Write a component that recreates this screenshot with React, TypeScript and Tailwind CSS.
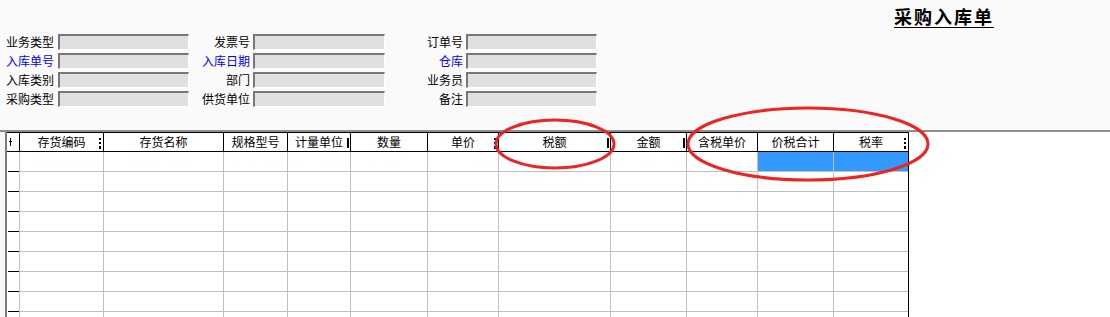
import React from "react";

// 采购入库单 — header form + detail grid, with two red annotation ellipses.

type Field = { label: string; key?: boolean };

const formRows: Field[][] = [
  [{ label: "业务类型" }, { label: "发票号" }, { label: "订单号" }],
  [{ label: "入库单号", key: true }, { label: "入库日期", key: true }, { label: "仓库", key: true }],
  [{ label: "入库类别" }, { label: "部门" }, { label: "业务员" }],
  [{ label: "采购类型" }, { label: "供货单位" }, { label: "备注" }],
];

type Col = { title: string; w: string; mark?: "bar" | "glyph"; blue?: boolean };

const columns: Col[] = [
  { title: "存货编码", w: "w-[84px]", mark: "glyph" },
  { title: "存货名称", w: "w-[120px]" },
  { title: "规格型号", w: "w-[64px]" },
  { title: "计量单位", w: "w-[63px]", mark: "bar" },
  { title: "数量", w: "w-[77px]" },
  { title: "单价", w: "w-[71px]", mark: "glyph" },
  { title: "税额", w: "w-[112px]", mark: "bar" },
  { title: "金额", w: "w-[76px]", mark: "bar" },
  { title: "含税单价", w: "w-[71px]" },
  { title: "价税合计", w: "w-[76px]", blue: true },
  { title: "税率", w: "w-[74px]", mark: "glyph", blue: true },
];

const bodyRows = Array.from({ length: 9 }, (_, i) => i);

function Input() {
  return (
    <div className="h-[16px] bg-[#e0e0e0] border-t-2 border-l-2 border-t-[#777777] border-l-[#777777] border-b border-r border-b-white border-r-white" />
  );
}

function Mark({ kind }: { kind: "bar" | "glyph" }) {
  if (kind === "bar") {
    return <span className="absolute right-[1px] top-[5px] w-[2px] h-[10px] bg-black" />;
  }
  return (
    <span className="absolute right-[2px] top-[5px] flex flex-col gap-[2px]">
      <span className="w-[2px] h-[2px] bg-black" />
      <span className="w-[2px] h-[2px] bg-black" />
      <span className="w-[2px] h-[3px] bg-black" />
    </span>
  );
}

export default function App() {
  return (
    <div className="relative w-[1110px] h-[317px] overflow-hidden bg-white text-[12px] text-black font-['Noto_Sans_CJK_SC','Noto_Sans',sans-serif]">
      {/* header panel */}
      <div className="h-[132px] bg-[#fafafa] border-b-2 border-[#8e8e8e]">
        <div className="h-[32px] flex justify-end pr-[116px] pt-[5px]">
          <h1 className="text-[18px] leading-[22px] font-bold tracking-[2px] underline underline-offset-[3px] decoration-1">
            采购入库单
          </h1>
        </div>
        <div className="flex flex-col">
          {formRows.map((row, ri) => (
            <div
              key={ri}
              className="grid grid-cols-[58px_131px_64px_132px_81px_131px] items-center h-[19px]"
            >
              {row.map((f, fi) => (
                <React.Fragment key={fi}>
                  <span
                    className={`leading-[16px] whitespace-nowrap ${
                      fi === 0 ? "pl-[6px]" : "text-right pr-[3px]"
                    } ${f.key ? "text-[#0000ff]" : ""}`}
                  >
                    {f.label}
                  </span>
                  <Input />
                </React.Fragment>
              ))}
            </div>
          ))}
        </div>
      </div>

      {/* detail grid */}
      <div className="flex h-[185px] overflow-hidden">
        <div className="w-[5px] bg-[#f7f7f7]" />
        <div className="flex flex-col border-l-2 border-[#7c7c7c] border-r border-r-black">
          <div className="flex shrink-0 h-[20px] border-t border-b border-black">
            <div className="relative w-[13px] border-r border-black">
              <span className="absolute left-[3px] top-[5px] w-[1px] h-[8px] bg-black" />
              <span className="absolute left-[2px] top-[8px] w-[3px] h-[1px] bg-black" />
            </div>
            {columns.map((c, i) => (
              <div
                key={c.title}
                className={`relative ${c.w} flex items-center justify-center leading-[18px] ${
                  i < columns.length - 1 ? "border-r border-black" : ""
                }`}
              >
                {c.title}
                {c.mark && <Mark kind={c.mark} />}
              </div>
            ))}
          </div>
          {bodyRows.map((r) => (
            <div key={r} className="flex shrink-0 h-[20px]">
              <div className="w-[13px] border-r border-[#c0c0c0] flex flex-col justify-end">
                <span className="ml-[1px] w-[11px] h-[1px] bg-black" />
              </div>
              {columns.map((c, i) => (
                <div
                  key={c.title}
                  className={`${c.w} border-b border-[#c0c0c0] ${
                    i < columns.length - 1 ? "border-r" : ""
                  } ${r === 0 && c.blue ? "bg-[#3399ff]" : "bg-white"}`}
                />
              ))}
            </div>
          ))}
        </div>
        <div className="flex-1 bg-white" />
      </div>

      {/* red annotation ellipses */}
      <svg className="absolute inset-0 pointer-events-none" width="1110" height="317">
        <ellipse cx="555" cy="144" rx="59" ry="24" fill="none" stroke="#ec2424" strokeWidth="3" />
        <ellipse cx="808" cy="144" rx="120" ry="36" fill="none" stroke="#ec2424" strokeWidth="3" />
      </svg>
    </div>
  );
}
